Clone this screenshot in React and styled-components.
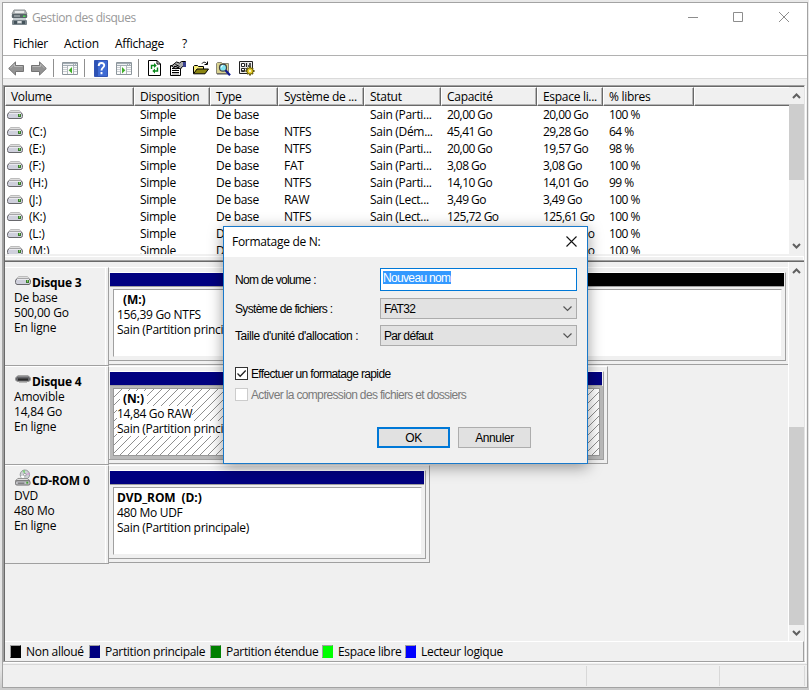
import styled, { createGlobalStyle, css } from 'styled-components'

const columns = [
    { label: 'Volume', width: 129 },
    { label: 'Disposition', width: 76 },
    { label: 'Type', width: 68 },
    { label: 'Système de ...', width: 86 },
    { label: 'Statut', width: 77 },
    { label: 'Capacité', width: 96 },
    { label: 'Espace li...', width: 66 },
    { label: '% libres', width: 91 },
]

const volumes = [
    ['', '', 'Sain (Parti...', '20,00 Go', '20,00 Go', '100 %'],
    ['(C:)', 'NTFS', 'Sain (Dém...', '45,41 Go', '29,28 Go', '64 %'],
    ['(E:)', 'NTFS', 'Sain (Parti...', '20,00 Go', '19,57 Go', '98 %'],
    ['(F:)', 'FAT', 'Sain (Parti...', '3,08 Go', '3,08 Go', '100 %'],
    ['(H:)', 'NTFS', 'Sain (Parti...', '14,10 Go', '14,01 Go', '99 %'],
    ['(J:)', 'RAW', 'Sain (Lect...', '3,49 Go', '3,49 Go', '100 %'],
    ['(K:)', 'NTFS', 'Sain (Lect...', '125,72 Go', '125,61 Go', '100 %'],
    ['(L:)', 'NTFS', 'Sain (Lect...', '97,66 Go', '117,55 Go', '100 %'],
    ['(M:)', 'NTFS', 'Sain (Parti...', '156,39 Go', '156,28 Go', '100 %'],
]

const disks = [
    {
        name: 'Disque 3', kind: 'De base', size: '500,00 Go', icon: 'disk', drop: 5, width: 700,
        label: '(M:)', indent: true, detail: '156,39 Go NTFS', split: 300,
    },
    {
        name: 'Disque 4', kind: 'Amovible', size: '14,84 Go', icon: 'removable', drop: 6, width: 499,
        label: '(N:)', indent: true, detail: '14,84 Go RAW', selected: true,
    },
    {
        name: 'CD-ROM 0', kind: 'DVD', size: '480 Mo', icon: 'cd', drop: 2, width: 321,
        label: 'DVD_ROM\u00a0 (D:)', detail: '480 Mo UDF',
    },
]

const legend = [
    { label: 'Non alloué', color: '#000', width: 79 },
    { label: 'Partition principale', color: '#000080', width: 121 },
    { label: 'Partition étendue', color: '#008000', width: 112 },
    { label: 'Espace libre', color: '#00ff00', width: 83 },
    { label: 'Lecteur logique', color: '#0000ff', width: 110 },
]

function Drive() {
    return (
        <svg width="16" height="9" viewBox="0 0 16 9">
            <path d="M3.500 .5h9l2.500 3H1z" fill="#dedede" stroke="#bcbcbc" />
            <rect x=".5" y="3" width="15" height="5.500" rx="2" fill="#cfd0dc" stroke="#6e6e73" />
            <path d="M2 3.500h12" stroke="#e9e9ee" />
            <path d="M2 8.500h12" stroke="#68686c" />
            <path d="M11 4h3v3h-3z" fill="#3d7a31" />
            <path d="M12 4h1v2h-1z" fill="#7ccf5e" />
        </svg>
    )
}

function Removable() {
    return (
        <svg width="16" height="8" viewBox="0 0 16 8">
            <path d="M3 .5h10l2.500 2.500v2L14 6.500H2L.5 5V3z" fill="#66676b" stroke="#9a9a9a" />
            <path d="M3 1h10" stroke="#b0b0b0" />
            <path d="M3 4.500h10" stroke="#2b2b2b" strokeWidth="2" />
            <path d="M4 7.500h8" stroke="#bbb" />
        </svg>
    )
}

function CdDrive() {
    return (
        <svg width="16" height="17" viewBox="0 0 17 17">
            <circle cx="10.500" cy="5.500" r="5" fill="#cdd1d4" stroke="#8f9496" />
            <path d="M10.500 5.500L8 1.200a5 5 0 0 1 2.500-.7z" fill="#7fd07c" />
            <path d="M10.500 5.500L15 3.400a5 5 0 0 1 .4 2z" fill="#d79ad8" />
            <path d="M10.500 5.500L6 7.500a5 5 0 0 0 3 2.700z" fill="#fff" />
            <circle cx="10.500" cy="5.500" r="1.400" fill="#fff" stroke="#8f9496" />
            <path d="M3 9.500h10l3 2.500H.5z" fill="#dedede" stroke="#8a8a8a" />
            <rect x=".5" y="12" width="15.500" height="4.500" rx="1.500" fill="#c3c4c9" stroke="#666" />
            <path d="M3 14.500h7" stroke="#555" />
            <path d="M12 13h2v2h-2z" fill="#45a033" />
        </svg>
    )
}

const diskIcons = { disk: Drive, removable: Removable, cd: CdDrive }

function AppIcon() {
    return (
        <svg width="17" height="17" viewBox="0 0 17 17">
            <path d="M3 1h11l2 4H1z" fill="#b6bbbd" stroke="#8c9193" />
            <path d="M4 3h9" stroke="#e8eaeb" strokeWidth="2" />
            <rect x=".8" y="5" width="15.400" height="4" rx="1" fill="#59646a" />
            <path d="M3 7h6" stroke="#c5cacc" />
            <path d="M12 6.500h2.500v1.500H12z" fill="#50db58" />
            <path d="M2 9h13v2H2z" fill="#c5ccd0" />
            <rect x="1" y="11" width="15" height="5" rx="1" fill="#7b868c" />
            <path d="M3 12h3v3H3zM11 12h3v3h-3z" fill="#44535b" />
            <path d="M6.500 13h4" stroke="#dce0e2" strokeWidth="2" />
        </svg>
    )
}

function ArrowIcon({ flip }) {
    return (
        <svg width="16" height="15" viewBox="0 0 16 15">
            <g transform={flip ? 'matrix(-1 0 0 1 16 0)' : undefined}>
                <path d="M.7 7.500L7.500 .9v3.600h8v6h-8v3.600z" fill="#939393" stroke="#747474" />
                <path d="M2.300 7.300L6.500 3v2.500h8" fill="none" stroke="#b8b8b8" />
            </g>
        </svg>
    )
}

function PaneIcon({ flip }) {
    return (
        <svg width="16" height="13" viewBox="0 0 16 13">
            <path d="M.5.5h15v12H.5z" fill="#fbfbfb" stroke="#8d969c" />
            <path d="M1 1h14v3H1z" fill="#a3adb4" />
            <path d="M1 2.500h10M12 2.500h1M14 2.500h1" stroke="#eef0f2" />
            <g transform={flip ? 'matrix(-1 0 0 1 16 0)' : undefined}>
                <path d="M1 5.500h4M1 7.500h4M1 9.500h4M12 5.500h3M12 7.500h3M12 9.500h3" stroke="#c9ced2" />
                <path d="M5.500 4v8M11.500 4v8" stroke="#b0b7bc" />
                <path d="M10 5v6.400L6.700 8.200z" fill="#3fae29" />
            </g>
        </svg>
    )
}

function HelpIcon() {
    return (
        <svg width="14" height="17" viewBox="0 0 14 17">
            <path d="M.5.5h13v16H.5z" fill="#3f6bd3" stroke="#3455b4" />
            <path d="M1 1h3v15H1z" fill="#2c52b5" />
            <path d="M4.700 6c0-4 6-3.800 5.500-.3-.3 2-2.700 2.200-2.700 4.800M7.500 12v2.200" fill="none" stroke="#fff" strokeWidth="1.900" />
        </svg>
    )
}

function RefreshIcon() {
    return (
        <svg width="13" height="16" viewBox="0 0 13 16">
            <path d="M.5.500h8.500l3.500 3.500v11.500H.5z" fill="#fff" stroke="#000" />
            <path d="M9 .500v3.500h3.500" fill="none" stroke="#000" />
            <path d="M3.500 9v-3.500h3M9.500 7.500v3.500h-3" fill="none" stroke="#0a8a1c" strokeWidth="1.400" />
            <path d="M6 3v5l2.700-2.500zM7 8.500v5L4.300 11z" fill="#0a8a1c" />
        </svg>
    )
}

function PropertiesIcon() {
    return (
        <svg width="16" height="15" viewBox="0 0 16 15">
            <path d="M.5 4.500h10v10H.5z" fill="#fff" stroke="#000" />
            <path d="M2 7.500h7M2 9.500h7M2 11.500h7" stroke="#000" />
            <path d="M2 13h7" stroke="#888" />
            <path d="M1.500 5L6.500 1l3 1 2-1.500h4v5h-3L10.500 8 8 6.500 6 8z" fill="#a9a9a9" stroke="#000" />
            <path d="M13 1h3v5h-3" fill="#3a4290" />
            <path d="M5.500 3.500l4 2M6 5.500l3 1.500M4 5.500h2" stroke="#000" />
        </svg>
    )
}

function FolderIcon() {
    return (
        <svg width="16" height="14" viewBox="0 0 16 14">
            <path d="M.5 12.500v-7l1-1h3l1 1h5v2.500" fill="#f7ec78" stroke="#000" />
            <path d="M.5 12.800L4 8h11.500L12 12.800z" fill="#8b8511" stroke="#000" />
            <path d="M9 2.500c1-1.500 3.500-2 5 .5M14.500 .5v3h-3" fill="none" stroke="#000" />
        </svg>
    )
}

function SearchIcon() {
    return (
        <svg width="15" height="15" viewBox="0 0 15 15">
            <path d="M.5 12.500V2.500l1-1h4l1 1h6v10z" fill="#d9d290" stroke="#8b8877" />
            <path d="M1 13h11" stroke="#555" />
            <circle cx="7" cy="6.700" r="3.500" fill="#7fe4f2" stroke="#444" strokeWidth="1.200" />
            <path d="M5.300 6.500a2 2 0 0 1 1.700-2" fill="none" stroke="#fff" />
            <path d="M9.500 9.300l4.500 5" stroke="#111a91" strokeWidth="2.200" />
        </svg>
    )
}

function SettingsIcon() {
    return (
        <svg width="16" height="15" viewBox="0 0 16 15">
            <path d="M.5 .5h13v12H.5z" fill="#ededed" stroke="#222" />
            <path d="M2.500 2.500h3v3h-3zM2.500 7.500h3v3h-3z" fill="#fff" stroke="#222" />
            <path d="M7.500 2v4M10 3h2M9 5h3M7 8h2" stroke="#222" strokeWidth="1.300" />
            <path d="M3 9l1 1.500L6.500 7" fill="none" stroke="#222" />
            <path d="M11 5.500v9M6.500 10h9M8 7l6 6M14 7l-6 6" stroke="#4d4400" strokeWidth="1.800" />
            <circle cx="11" cy="10" r="3.200" fill="#e9cf2d" stroke="#6f6309" />
            <circle cx="11" cy="10" r="1" fill="#fff" />
        </svg>
    )
}

function Chevron({ up }) {
    return (
        <svg width="9" height="6" viewBox="0 0 9 6">
            <path d={up ? 'M1 5l3.500-3.500L8 5' : 'M1 1l3.500 3.500L8 1'} fill="none" stroke="#606060" strokeWidth="2" />
        </svg>
    )
}

function SelectBox({ value }) {
    return (
        <Select>
            {value}
            <svg width="9" height="6" viewBox="0 0 9 6">
                <path d="M.5 .5l4 4 4-4" fill="none" stroke="#555" strokeWidth="1.200" />
            </svg>
        </Select>
    )
}

function FormatDialog() {
    return (
        <Dialog>
            <DialogTitle>
                Formatage de N:
                <svg width="11" height="11" viewBox="0 0 11 11">
                    <path d="M.5.5l10 10M10.500.500l-10 10" stroke="#111" strokeWidth="1.100" />
                </svg>
            </DialogTitle>
            <Field $gap={7}>
                <FieldLabel>Nom de volume :</FieldLabel>
                <Input><Selection>Nouveau nom</Selection></Input>
            </Field>
            <Field $gap={6}>
                <FieldLabel>Système de fichiers :</FieldLabel>
                <SelectBox value="FAT32" />
            </Field>
            <Field $gap={21}>
                <FieldLabel $spacing={-0.42}>Taille d'unité d'allocation :</FieldLabel>
                <SelectBox value="Par défaut" />
            </Field>
            <CheckRow>
                <CheckBox>
                    <svg width="11" height="11" viewBox="0 0 11 11">
                        <path d="M1.500 5.500l2.700 2.700L9.700 2.500" fill="none" stroke="#222" strokeWidth="1.300" />
                    </svg>
                </CheckBox>
                <CheckLabel>Effectuer un formatage rapide</CheckLabel>
            </CheckRow>
            <CheckRow $disabled>
                <CheckBox $disabled />
                <CheckLabel>Activer la compression des fichiers et dossiers</CheckLabel>
            </CheckRow>
            <Buttons>
                <Button $primary>OK</Button>
                <Button>Annuler</Button>
            </Buttons>
        </Dialog>
    )
}

function DiskRow({ disk }) {
    const Icon = diskIcons[disk.icon]
    return (
        <Disk>
            <DiskInfo>
                <DiskName $drop={disk.drop}><Icon />{disk.name}</DiskName>
                <div>{disk.kind}</div>
                <div>{disk.size}</div>
                <div>En ligne</div>
            </DiskInfo>
            <DiskTrack $width={disk.width} $open={!!disk.split}>
                <Frame>
                    <Bars>
                        <Bar />
                        {disk.split && <Bar $width={disk.split} $color="#000" />}
                    </Bars>
                    <Contents $selected={disk.selected}>
                        <Partition $selected={disk.selected}>
                            <PartitionName $indent={disk.indent}>{disk.label}</PartitionName>
                            <PartitionLine>{disk.detail}</PartitionLine>
                            <PartitionLine>Sain (Partition principale)</PartitionLine>
                        </Partition>
                    </Contents>
                </Frame>
            </DiskTrack>
        </Disk>
    )
}

function App() {
    return (
        <Desktop>
            <GlobalStyle />
            <Window>
                <TitleBar>
                    <AppIcon />
                    <Title>Gestion des disques</Title>
                    <svg width="102" height="12" viewBox="0 0 102 12">
                        <path d="M0 6.500h10M45.500 1.500h9v9h-9zM91 1l10 10M101 1L91 11" fill="none" stroke="#8d8d8d" />
                    </svg>
                </TitleBar>
                <Menu>
                    <MenuItem $width={51}>Fichier</MenuItem>
                    <MenuItem $width={51} $wide>Action</MenuItem>
                    <MenuItem $width={67}>Affichage</MenuItem>
                    <MenuItem $width={20}>?</MenuItem>
                </Menu>
                <Toolbar>
                    <Tool $width={23}><ArrowIcon /></Tool>
                    <Tool $width={22}><ArrowIcon flip /></Tool>
                    <Separator $gap={8} />
                    <Tool $width={22}><PaneIcon /></Tool>
                    <Separator $gap={9} />
                    <Tool $width={22}><HelpIcon /></Tool>
                    <Tool $width={22}><PaneIcon flip /></Tool>
                    <Separator $gap={9} />
                    <Tool $width={22}><RefreshIcon /></Tool>
                    <Tool $width={23}><PropertiesIcon /></Tool>
                    <Tool $width={23}><FolderIcon /></Tool>
                    <Tool $width={23}><SearchIcon /></Tool>
                    <Tool $width={16}><SettingsIcon /></Tool>
                </Toolbar>
                <Main>
                    <VolumePane>
                        <VolumeList>
                            <Header>
                                {columns.map(c => <HeaderCell key={c.label} $width={c.width}>{c.label}</HeaderCell>)}
                                <HeaderRest />
                            </Header>
                            {volumes.map(([name, fs, status, size, free, percent]) => (
                                <VolumeRow key={name}>
                                    <VolumeName><Drive />{name}</VolumeName>
                                    {['Simple', 'De base', fs, status, size, free, percent].map((text, i) => (
                                        <Cell key={i} $width={columns[i + 1].width} $tight={i > 3}>{text}</Cell>
                                    ))}
                                </VolumeRow>
                            ))}
                        </VolumeList>
                        <ScrollBar>
                            <ScrollEnd $height={17}><Chevron up /></ScrollEnd>
                            <Thumb $height={76} />
                            <ScrollSpace />
                            <ScrollEnd $height={17}><Chevron /></ScrollEnd>
                        </ScrollBar>
                    </VolumePane>
                    <Splitter />
                    <DiskPane>
                        <DiskList>
                            {disks.map(d => <DiskRow key={d.name} disk={d} />)}
                        </DiskList>
                        <ScrollBar $line>
                            <ScrollEnd $height={19}><Chevron up /></ScrollEnd>
                            <ScrollSpace />
                            <Thumb $height={198} />
                            <ScrollEnd $height={16}><Chevron /></ScrollEnd>
                        </ScrollBar>
                    </DiskPane>
                    <Legend>
                        {legend.map(l => (
                            <LegendItem key={l.label} $width={l.width}>
                                <Swatch $color={l.color} />
                                {l.label}
                            </LegendItem>
                        ))}
                    </Legend>
                </Main>
                <StatusBar>
                    <StatusCell $width={584} />
                    <StatusCell $width={133} />
                    <StatusCell $width={85} />
                </StatusBar>
            </Window>
            <FormatDialog />
        </Desktop>
    )
}

export default App

const GlobalStyle = createGlobalStyle`
    * {
        box-sizing: border-box;
    }
    body {
        margin: 0;
        overflow: hidden;
    }
    svg {
        display: block;
        flex: none;
    }
`

const Desktop = styled.div`
    position: relative;
    width: 809px;
    height: 690px;
    padding: 2px 1px 2px 2px;
    overflow: hidden;
    background: linear-gradient(#e9e9e9, #e4e4e4 97%, #cbcbcb 99.700%);
    font: 12px/17px 'Open Sans', 'Noto Sans', sans-serif;
    letter-spacing: -0.3px;
    color: #000;
    white-space: nowrap;
`

const Window = styled.div`
    display: flex;
    flex-direction: column;
    height: 686px;
    border: 1px solid #a3a3a3;
    background: #f0f0f0;
`

const TitleBar = styled.div`
    display: flex;
    align-items: center;
    height: 30px;
    padding: 0 17px 2px 8px;
    background: #fff;
    color: #999;
`

const Title = styled.span`
    flex: 1;
    padding-left: 4px;
    letter-spacing: -0.45px;
`

const Menu = styled.div`
    display: flex;
    height: 23px;
    padding: 2px 10px 0;
    background: #fff;
    border-bottom: 1px solid #b1b1b1;
`

const MenuItem = styled.span`
    width: ${p => p.$width}px;
    ${p => p.$wide && 'letter-spacing: 0;'}
`

const Toolbar = styled.div`
    display: flex;
    align-items: center;
    height: 23px;
    padding: 2px 5px 0;
    background: #fff;
    border-bottom: 1px solid #dadada;
`

const Tool = styled.span`
    width: ${p => p.$width}px;
`

const Separator = styled.i`
    width: 1px;
    height: 18px;
    margin-right: ${p => p.$gap}px;
    background: #8f8f8f;
`

const Main = styled.div`
    display: flex;
    flex-direction: column;
    height: 577px;
    margin: 6px 2px 0 0;
    border: 1px solid #a0a0a0;
    border-right-color: #e3e3e3;
    box-shadow: inset 1px 1px #696969, 1px 1px #fff;
    padding: 1px 0 0 1px;
`

const VolumePane = styled.div`
    display: flex;
    height: 167px;
`

const VolumeList = styled.div`
    flex: 1;
    height: 167px;
    overflow: hidden;
    background: #fff;
`

const Header = styled.div`
    display: flex;
    height: 19px;
`

const HeaderCell = styled.div`
    width: ${p => p.$width}px;
    padding-left: 5px;
    line-height: 18px;
    background: #f0f0f0;
    border: 1px solid;
    border-color: #fff #696969 #696969 #fff;
    box-shadow: inset -1px -1px #b5b5b5;
`

const HeaderRest = styled(HeaderCell)`
    flex: 1;
    border-right: 0;
    box-shadow: inset 0 -1px #b5b5b5;
`

const VolumeRow = styled.div`
    display: flex;
    height: 17px;
`

const Cell = styled.div`
    width: ${p => p.$width}px;
    padding-left: 6px;
    ${p => p.$tight && 'letter-spacing: -0.55px;'}
`

const VolumeName = styled.div`
    display: flex;
    align-items: center;
    gap: 6px;
    width: 129px;
    padding-left: 2px;
    letter-spacing: -0.2px;
`

const ScrollBar = styled.div`
    display: flex;
    flex-direction: column;
    width: ${p => (p.$line ? 16 : 15)}px;
    ${p => p.$line && 'border-left: 1px solid #fff;'}
    background: #f0f0f0;
`

const ScrollEnd = styled.div`
    display: flex;
    align-items: center;
    justify-content: center;
    height: ${p => p.$height}px;
`

const Thumb = styled.div`
    height: ${p => p.$height}px;
    background: #cdcdcd;
`

const ScrollSpace = styled.div`
    flex: 1;
`

const Splitter = styled.div`
    height: 8px;
    background: #f0f0f0;
    border-bottom: 1px solid #696969;
    box-shadow: inset 0 -1px #a0a0a0, inset 0 2px #f0f0f0, inset -1px 3px #fff;
`

const DiskPane = styled.div`
    display: flex;
    height: 380px;
`

const DiskList = styled.div`
    flex: 1;
    min-width: 0;
    padding-top: 5px;
`

const Disk = styled.div`
    display: flex;
    height: 99px;
`

const DiskInfo = styled.div`
    width: 104px;
    padding: 7px 0 0 9px;
    line-height: 15px;
    letter-spacing: -0.2px;
    border-top: 1px solid #fff;
    border-right: 1px solid #a0a0a0;
    border-bottom: 1px solid #a0a0a0;
    box-shadow: inset -2px 0 #f0f0f0, inset -3px 0 #fff;
`

const DiskName = styled.div`
    display: flex;
    height: 15px;
    padding-left: 1px;
    gap: 1px;
    font-weight: bold;

    svg {
        align-self: flex-end;
        margin-bottom: ${p => p.$drop}px;
    }
`

const DiskTrack = styled.div`
    width: ${p => (p.$open ? 679 : p.$width)}px;
    height: 98px;
    padding: ${p => (p.$open ? '4px 2px 3px 0' : '4px 3px 3px 0')};
    border-top: 1px solid #fff;
    border-right: ${p => (p.$open ? 0 : '1px solid #a0a0a0')};
    border-bottom: 1px solid #a0a0a0;
`

const Frame = styled.div`
    height: 89px;
    border-top: 1px solid #fff;
    border-right: 1px solid #a0a0a0;
    border-bottom: 1px solid #a0a0a0;
    padding-left: 1px;
`

const Bars = styled.div`
    display: flex;
    height: 14px;
    margin-right: 1px;
    border-bottom: 1px solid #a0a0a0;
`

const Bar = styled.div`
    flex: ${p => (p.$width ? `0 0 ${p.$width}px` : 1)};
    background: ${p => p.$color || '#000080'};
`

const Contents = styled.div`
    height: 73px;
    padding: 2px 3px 3px;
    background: ${p => (p.$selected ? '#b9b9b9' : '#f0f0f0')};
`

const Partition = styled.div`
    height: 68px;
    padding: 2px 3px;
    line-height: 15px;
    border: 1px solid;
    border-color: #a0a0a0 #f0f0f0 #f0f0f0 #a0a0a0;
    background: #fff;

    ${p => p.$selected && css`
        border-color: #999;
        background: repeating-linear-gradient(135deg, #fff 0 4.957px, #8f8f8f 4.957px 5.657px);
    `}
`

const PartitionLine = styled.div`
    width: fit-content;
    background: #fff;
`

const PartitionName = styled(PartitionLine)`
    margin-left: ${p => (p.$indent ? 3 : 0)}px;
    padding: 0 ${p => (p.$indent ? 3 : 0)}px;
    font-weight: bold;
    letter-spacing: -0.1px;
`

const Legend = styled.div`
    display: flex;
    align-items: center;
    height: 20px;
    padding-left: 5px;
    border-top: 1px solid #fff;
    border-right: 1px solid #a0a0a0;
`

const LegendItem = styled.div`
    display: flex;
    align-items: center;
    gap: 5px;
    width: ${p => p.$width}px;
`

const Swatch = styled.i`
    width: 11px;
    height: 13px;
    border: 1px solid;
    border-color: #a0a0a0 ${p => p.$color} ${p => p.$color} #a0a0a0;
    background: ${p => p.$color};
`

const StatusBar = styled.div`
    display: flex;
    flex: 1;
    margin-top: 2px;
    padding: 1px 0;
    border-top: 1px solid #d8d8d8;
`

const StatusCell = styled.div`
    width: ${p => p.$width}px;
    border-right: 1px solid #d8d8d8;
`

const Dialog = styled.div`
    position: absolute;
    left: 223px;
    top: 226px;
    width: 365px;
    height: 238px;
    border: 1px solid #1979ca;
    background: #f0f0f0;
    box-shadow: 0 3px 14px rgba(0, 0, 0, 0.4);
    font-family: 'Liberation Sans', Arial, sans-serif;
    letter-spacing: -0.66px;
`

const DialogTitle = styled.div`
    display: flex;
    align-items: center;
    justify-content: space-between;
    height: 30px;
    margin-bottom: 11px;
    padding: 0 10px 2px 8px;
    background: #fff;
    font-family: 'Open Sans', 'Noto Sans', sans-serif;
    letter-spacing: -0.3px;
`

const Field = styled.div`
    display: flex;
    align-items: center;
    margin-bottom: ${p => p.$gap}px;
    padding-left: 11px;
`

const FieldLabel = styled.label`
    width: 145px;
    padding-top: 2px;
    letter-spacing: ${p => p.$spacing || -0.66}px;
`

const Input = styled.div`
    width: 197px;
    height: 23px;
    padding: 2px;
    border: 1px solid #0078d7;
    background: #fff;
`

const Selection = styled.span`
    display: block;
    width: fit-content;
    height: 13px;
    line-height: 14px;
    background: #3399ff;
    color: #fff;
    padding: 0 1px 0 0;
`

const Select = styled.div`
    display: flex;
    align-items: center;
    justify-content: space-between;
    width: 197px;
    height: 21px;
    padding: 1px 4px 0 3px;
    border: 1px solid #acacac;
    background: #e2e2e2;
`

const CheckRow = styled.div`
    display: flex;
    align-items: center;
    gap: 3px;
    height: 13px;
    margin-bottom: 8px;
    padding-left: 11px;
    color: ${p => (p.$disabled ? '#7a7a7a' : '#000')};
`

const CheckBox = styled.span`
    width: 13px;
    height: 13px;
    border: 1px solid ${p => (p.$disabled ? '#ccc' : '#333')};
    background: #fff;
`

const CheckLabel = styled.span`
    padding-top: 2px;
`

const Buttons = styled.div`
    display: flex;
    gap: 8px;
    margin: 26px 0 0 153px;
`

const Button = styled.button`
    width: 73px;
    height: 21px;
    padding: 1px 0 0;
    border: ${p => (p.$primary ? '2px solid #0078d7' : '1px solid #adadad')};
    background: #e1e1e1;
    color: #000;
    font: inherit;
    letter-spacing: -0.4px;
    line-height: 17px;
`
